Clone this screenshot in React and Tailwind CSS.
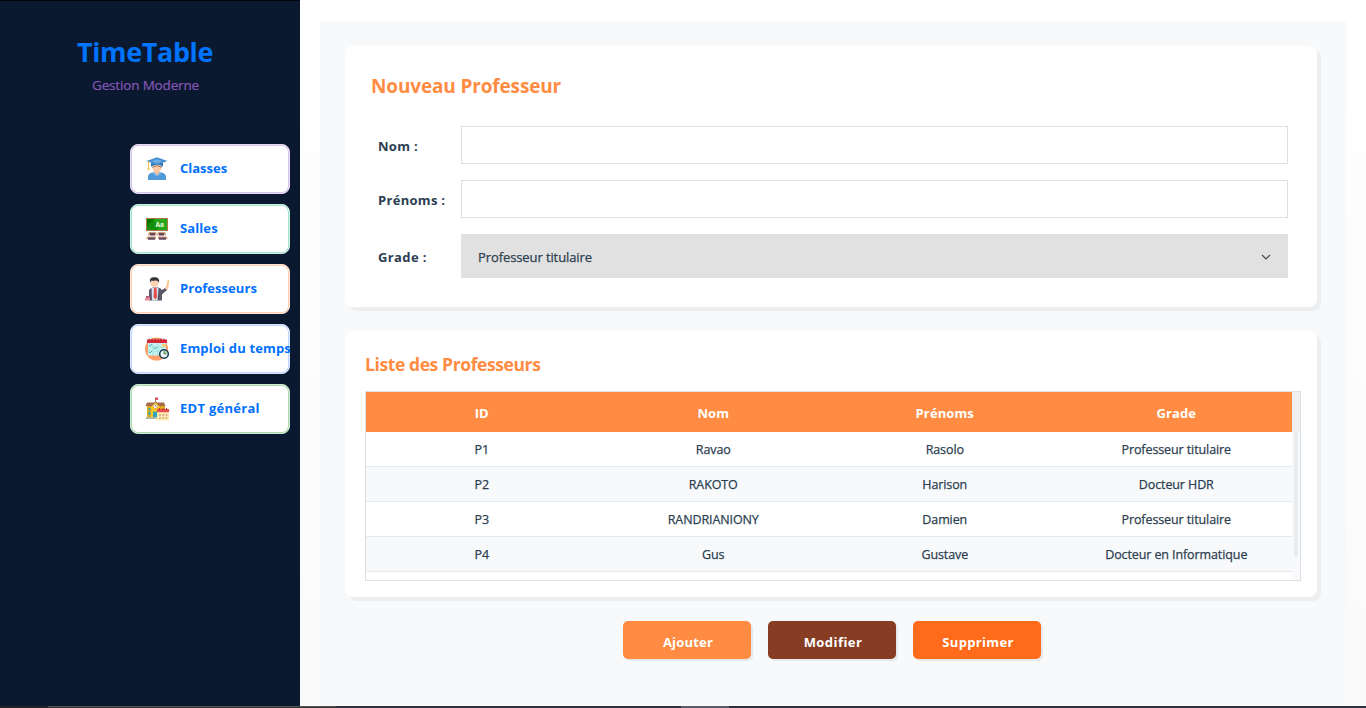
const navItems = [
  { label: "Classes", border: "border-[#e6dcf0] shadow-[inset_0_0_0_1px_#d9c5ea]", icon: StudentIcon, text: "tracking-[0px]" },
  { label: "Salles", border: "border-[#cfeee2] shadow-[inset_0_0_0_1px_#a3e4cb]", icon: BoardIcon, text: "tracking-[0.1px]" },
  { label: "Professeurs", border: "border-[#fbe4d5] shadow-[inset_0_0_0_1px_#ffd0b0]", icon: TeacherIcon, text: "tracking-[0.05px]" },
  { label: "Emploi du temps", border: "border-[#dbe8fc] shadow-[inset_0_0_0_1px_#bcd6ff]", icon: ScheduleIcon, text: "tracking-[0.16px]" },
  { label: "EDT général", border: "border-[#cfe9d2] shadow-[inset_0_0_0_1px_#a8dcae]", icon: SchoolIcon, text: "tracking-[0.28px]" },
];

const rows = [
  ["P1", "Ravao", "Rasolo", "Professeur titulaire"],
  ["P2", "RAKOTO", "Harison", "Docteur HDR"],
  ["P3", "RANDRIANIONY", "Damien", "Professeur titulaire"],
  ["P4", "Gus", "Gustave", "Docteur en Informatique"],
];

function StudentIcon() {
  return (
    <svg viewBox="0 0 24 24" className="size-6">
      <path d="M3 23v-3q0-3.500 4-4.500h10q4 1 4 4.500v3z" fill="#4f9ad8" />
      <path d="m7.500 16 4.500 3.500 4.500-3.500-2-1.500h-5z" fill="#8abce6" />
      <path d="M10.300 13h3.400v3.500L12 17.800l-1.700-1.300z" fill="#fdb890" />
      <ellipse cx="12" cy="11" rx="4.400" ry="4.500" fill="#fecba9" />
      <path d="M6 5.500h12v4.200q-2.500-2-6-2t-6 2z" fill="#2f79bd" />
      <path d="M7.300 9.700q4.700-2.400 9.400 0v1.200q-2-1.600-4.700-1.600t-4.700 1.600z" fill="#8d6a5b" />
      <path d="m12 .3 10.500 3.700L12 8 1.500 4z" fill="#4a90d0" />
      <path d="m12 2.300 5.500 1.900-5.500 2-5.500-2z" fill="#6cb0e5" />
      <path d="M3.500 4.500v5" stroke="#edb83c" />
      <path d="M3.500 8.500 2.300 13h2.400z" fill="#f4c245" />
    </svg>
  );
}

function BoardIcon() {
  return (
    <svg viewBox="0 0 24 24" className="size-6">
      <path d="M1 1h22v13H1z" fill="#a97846" />
      <path d="M2 2h20v11H2z" fill="#138f0c" />
      <path d="m9 2 4 11h9V2z" fill="#28a71e" />
      <path d="M2 2h7L2 9z" fill="#087700" />
      <text x="10.500" y="9.500" fontSize="6.500" fontWeight="700" fill="#e6ffe0" fontFamily="Open Sans">Aa</text>
      <path d="M4 15h7l1 3.200H2.500zm9 0h7l1.500 3.200H12zM2.500 19.500H11V22H1zm10.500 0h8.500L23 22H13z" fill="#cfa27c" />
      <path d="M5 16h5v2.500H5zm9 0h5v2.500h-5zM3 20.500h7v2.300H3zm11 0h7v2.300h-7z" fill="#65475f" />
    </svg>
  );
}

function TeacherIcon() {
  return (
    <svg viewBox="0 0 24 24" className="size-6">
      <path d="M4 23.500V13q1-2 4-2.500h5q3 .5 4 2.500l3-2 2 2-5 4.500v6z" fill="#5b5768" />
      <path d="M6.500 11h7l-1 12.500H7z" fill="#d5e4f0" />
      <path d="M9 11h2.500l.5 9-1.700 2.500L8.500 20z" fill="#e64c4c" />
      <circle cx="9.500" cy="6" r="3.900" fill="#ffd2b4" />
      <path d="M5.200 6Q3.500 0 9.500.2 15 0 14 6q-1-3-3-2.500Q7 4 6.200 3.500z" fill="#353239" />
      <path d="m22.500 11 .8-8" stroke="#f1ba62" strokeWidth="1.400" />
      <path d="m20 11 1.500-3 2 2-1 3z" fill="#ffcaab" />
      <path d="M1 19h4v2.500H1z" fill="#b4648a" />
      <path d="M0 21h5v2.500H0z" fill="#f28b94" />
    </svg>
  );
}

function ScheduleIcon() {
  return (
    <svg viewBox="0 0 24 24" className="size-6">
      <circle cx="11.500" cy="12" r="11.500" fill="#ff9f69" />
      <path d="M3 4h18v14.500H3z" fill="#c7f2ef" />
      <path d="M2 2.500h20V6H2z" fill="#dc2638" />
      <path d="M4 1.500v2.500m3-2.500v2.500m3-2.500v2.500m3-2.500v2.500m3-2.500v2.500m3-2.500v2.500" stroke="#80232d" strokeWidth=".8" />
      <path d="M3 10h18M3 14h15M8 7v12M13 7v12" stroke="#8ddbdc" strokeWidth=".7" />
      <path d="M17 7h4v3h-4z" fill="#ffcb80" />
      <path d="m4 8 1 1 2-2m2 4 1 1 2-2m-8 5 1 1 2-2" fill="none" stroke="#36b5aa" strokeWidth=".9" />
      <circle cx="19" cy="17" r="4.300" fill="#edf9f7" stroke="#173653" strokeWidth="1.500" />
      <path d="M19 17v-3a3 3 0 0 1 3 3z" fill="#9bd97c" />
      <path d="M19 14v3h2" fill="none" stroke="#355" strokeWidth=".7" />
    </svg>
  );
}

function SchoolIcon() {
  return (
    <svg viewBox="0 0 24 24" className="size-6">
      <path d="M10.500 6V.5" stroke="#888" />
      <path d="M10.500 .5H13V3h-2.500z" fill="#e94b50" />
      <path d="M2 9h18v11H2z" fill="#e0ac17" />
      <path d="M2 5.500h17l1.500 3.500H.5z" fill="#a66b4c" />
      <path d="m6 10 4.500-5L15 10v10H6z" fill="#ffc821" />
      <path d="m5.500 9.500 5-5 5 5" fill="none" stroke="#a66b4c" />
      <circle cx="10.500" cy="9.300" r="2.100" fill="#f4fafb" stroke="#b9804b" strokeWidth=".5" />
      <path d="M10.500 8v1.300h1" fill="none" stroke="#555" strokeWidth=".5" />
      <path d="M3.500 11h2v2.500h-2zm0 4h2v3h-2zM8 14.500h4v5.500H8z" fill="#32a5bd" />
      <path d="M1 20h11v2H1z" fill="#b7b6a3" />
      <path d="M12 13h12v10.500H12z" fill="#ffebb5" />
      <path d="M12 12h12v3.200H12z" fill="#e94c4c" />
      <path d="M14.500 11v2m3.500-2v2m3.500-2v2" stroke="#b52a34" />
      <path d="M14 18h8.500M14 21h8.500" stroke="#ceaa79" strokeWidth="1.500" strokeDasharray="2 1.250" />
    </svg>
  );
}

function Field({ label }) {
  return (
    <div className="flex h-[38px] items-center">
      <label className="w-[83px] pt-1 tracking-[0.3px] whitespace-nowrap">{label}</label>
      <input className="h-[38px] w-[827px] border border-[#dedfe4] bg-white px-4 outline-none" />
    </div>
  );
}

export default function App() {
  return (
    <div className="flex h-[708px] w-[1366px] flex-col overflow-hidden bg-[#fdfdfd] font-['Open_Sans',sans-serif] text-[13px] text-[#2c3e50]">
      <div className="flex h-[706px]">
        <aside className="flex w-[300px] flex-col border-t border-[#01050c] bg-[#0a192f]">
          <div className="flex h-[143px] w-[290px] flex-col items-center pt-[31px]">
            <h1 className="text-[27px] leading-10 font-bold tracking-[-0.4px] text-[#0073ff]">TimeTable</h1>
            <p className="mt-[3px] pl-px text-[13.5px] leading-5 tracking-[-0.17px] text-[#8757b8] [-webkit-text-stroke:0.2px_#8757b8]">Gestion Moderne</p>
          </div>
          <nav className="flex flex-col items-end gap-2.5 pr-2.5">
            {navItems.map(({ label, border, icon: Icon, text }) => (
              <button key={label} className={`flex h-[50px] w-[160px] items-center rounded-lg border bg-white pl-[14px] text-left ${border}`}>
                <span className="shrink-0"><Icon /></span>
                <span className={`ml-[11px] whitespace-nowrap text-[13px] font-bold text-[#0070ff] ${text}`}>{label}</span>
              </button>
            ))}
          </nav>
        </aside>
        <main className="flex-1 bg-gradient-to-b from-[#ffffff] to-[#fafafa] pt-[21px] pr-5 pl-5">
          <div className="flex h-[685px] flex-col bg-[#f8f9fb] px-[25px] pt-[25px]">
            <section className="h-[261px] w-[972px] rounded-lg bg-white pt-6 pl-[26px] shadow-[4px_4px_0_#edeef0]">
              <h2 className="text-[19px] leading-8 font-bold tracking-[-0.15px] text-[#ff8c42]">Nouveau Professeur</h2>
              <div className="mt-6 flex flex-col gap-4 pl-[7px] font-bold">
                <Field label="Nom :" />
                <Field label="Prénoms :" />
                <div className="flex h-11 items-center">
                  <label className="w-[83px] pt-1 tracking-[0.38px] whitespace-nowrap">Grade :</label>
                  <button className="flex h-11 w-[827px] items-center justify-between bg-[#e1e1e1] pr-4 pl-[17px] text-[13px] font-normal">
                    <span className="pt-1 tracking-[-0.1px] [-webkit-text-stroke:0.25px_#2c3e50]">Professeur titulaire</span>
                    <svg viewBox="0 0 12 12" className="mt-0.5 size-3" fill="none" stroke="#4c4c4c" strokeWidth="1.200"><path d="m2 4 4 4 4-4" /></svg>
                  </button>
                </div>
              </div>
            </section>
            <section className="mt-6 h-[266px] w-[972px] rounded-lg bg-white pt-[17px] pl-5 shadow-[4px_4px_0_#edeef0]">
              <h2 className="text-[17.5px] leading-8 font-bold tracking-[-0.4px] text-[#ff8c42]">Liste des Professeurs</h2>
              <div className="mt-[11px] flex h-[190px] w-[936px] overflow-hidden border border-[#dcdfe5]">
                <div className="w-[926px] shrink-0 text-center">
                  <div className="grid h-10 grid-cols-4 items-center bg-[#ff8c42] pt-1 font-bold text-white">
                    {["ID", "Nom", "Prénoms", "Grade"].map((h) => <span key={h} className="tracking-[0.1px]">{h}</span>)}
                  </div>
                  {rows.map((row, i) => (
                    <div key={row[0]} className={`grid h-[35px] grid-cols-4 items-center border-b border-[#e6e9ed] text-[12.5px] tracking-[-0.1px] [-webkit-text-stroke:0.25px_#2c3e50] ${i % 2 ? "bg-[#f8f9fb]" : "bg-white"}`}>
                      {row.map((cell) => <span key={cell} className="pt-[3px]">{cell}</span>)}
                    </div>
                  ))}
                </div>
                <div className="flex w-2 flex-col bg-[#f8f9fb]">
                  <div className="h-10 bg-[#efefef]" />
                  <div className="ml-0.5 h-[125px] w-1 rounded-full bg-[#e9ecef]" />
                </div>
              </div>
            </section>
            <div className="mt-6 flex justify-center gap-[17px] pr-0.5 text-[13px] font-bold text-white">
              <button className="h-[38px] w-32 rounded-[5px] bg-[#ff8c42] pt-1.5 pl-0.5 tracking-[0.2px] shadow-[2px_2px_0_#e7e8ea]">Ajouter</button>
              <button className="h-[38px] w-32 rounded-[5px] bg-[#873d23] pt-1.5 pl-0.5 tracking-[0.45px] shadow-[2px_2px_0_#e7e8ea]">Modifier</button>
              <button className="h-[38px] w-32 rounded-[5px] bg-[#ff6b1a] pt-1.5 pl-0.5 tracking-[0.35px] shadow-[2px_2px_0_#e7e8ea]">Supprimer</button>
            </div>
          </div>
        </main>
      </div>
      <div className="flex h-0.5 bg-[#2b343e]">
        <div className="w-12 bg-[#222326]" />
        <div className="w-[288px] border-t border-[#555] bg-[#333]" />
        <div className="ml-[345px] w-12 bg-[#5a606b]" />
      </div>
    </div>
  );
}
